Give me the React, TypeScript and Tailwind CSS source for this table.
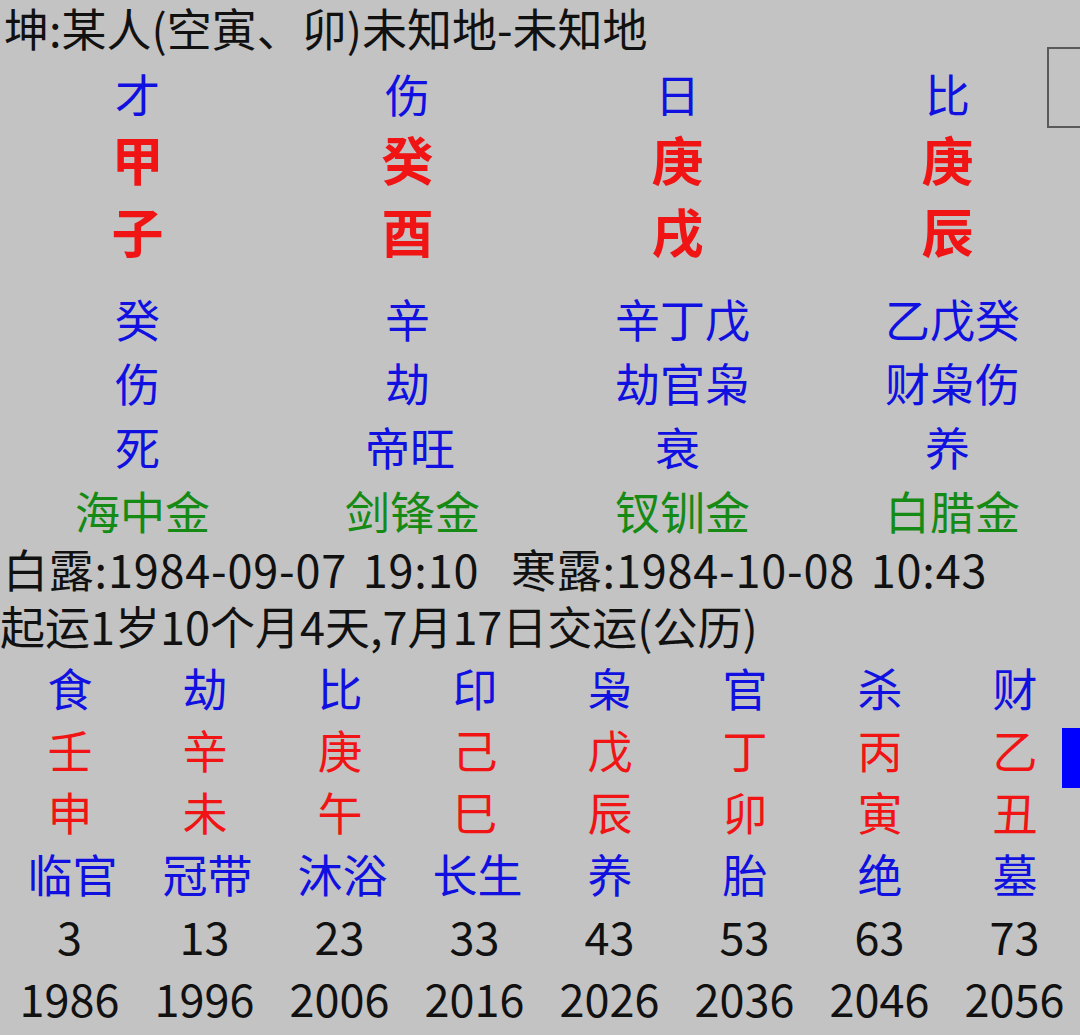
const blue = 'text-[#1010e0]'
const red = 'text-[#f01414]'
const green = 'text-[#158a15]'

const pillars = [
  { god: '才', stem: '甲', branch: '子', hidden: '癸', hiddenGod: '伤', stage: '死', nayin: '海中金' },
  { god: '伤', stem: '癸', branch: '酉', hidden: '辛', hiddenGod: '劫', stage: '帝旺', nayin: '剑锋金' },
  { god: '日', stem: '庚', branch: '戌', hidden: '辛丁戊', hiddenGod: '劫官枭', stage: '衰', nayin: '钗钏金' },
  { god: '比', stem: '庚', branch: '辰', hidden: '乙戊癸', hiddenGod: '财枭伤', stage: '养', nayin: '白腊金' },
]

const luck = [
  { god: '食', stem: '壬', branch: '申', stage: '临官', age: '3', year: '1986' },
  { god: '劫', stem: '辛', branch: '未', stage: '冠带', age: '13', year: '1996' },
  { god: '比', stem: '庚', branch: '午', stage: '沐浴', age: '23', year: '2006' },
  { god: '印', stem: '己', branch: '巳', stage: '长生', age: '33', year: '2016' },
  { god: '枭', stem: '戊', branch: '辰', stage: '养', age: '43', year: '2026' },
  { god: '官', stem: '丁', branch: '卯', stage: '胎', age: '53', year: '2036' },
  { god: '杀', stem: '丙', branch: '寅', stage: '绝', age: '63', year: '2046' },
  { god: '财', stem: '乙', branch: '丑', stage: '墓', age: '73', year: '2056' },
]

// the app centres each label a little right of the column middle, more for longer labels
const nudge = (t: string) => {
  if (/^\d+$/.test(t)) return 'pl-[4px]'
  if (t.length === 1) return 'pl-[5px]'
  if (t.length === 2) return 'pl-[10px]'
  return 'pl-[15px]'
}

function Row4({ items, color, h, extra = '' }: { items: string[]; color: string; h: string; extra?: string }) {
  return (
    <div className={`grid grid-cols-4 ${h} ${extra}`}>
      {items.map((t, i) => (
        <div key={i} className={`flex items-center justify-center ${nudge(t)} ${color}`}>
          {t}
        </div>
      ))}
    </div>
  )
}

function Row8({ items, color }: { items: string[]; color: string }) {
  return (
    <div className="grid grid-cols-8 h-[62px]">
      {items.map((t, i) => (
        <div key={i} className={`flex items-center justify-center ${nudge(t)} ${color}`}>
          {t}
        </div>
      ))}
    </div>
  )
}

export default function App() {
  return (
    <div className="relative w-[1080px] h-[1035px] overflow-hidden bg-[#c3c3c3] text-[45px] leading-none text-[#111] font-['Noto_Sans_CJK_SC','Noto_Sans',sans-serif]">
      <div className="h-[54px] flex items-center pl-[4px] whitespace-nowrap">坤:某人(空寅、卯)未知地-未知地</div>

      <Row4 items={pillars.map(p => p.god)} color={blue} h="h-[64px]" extra="mt-[7px]" />
      <Row4 items={pillars.map(p => p.stem)} color={`${red} font-bold text-[52px]`} h="h-[68px]" />
      <Row4 items={pillars.map(p => p.branch)} color={`${red} font-bold text-[52px]`} h="h-[76px]" />

      <Row4 items={pillars.map(p => p.hidden)} color={blue} h="h-[64px]" extra="mt-[17px]" />
      <Row4 items={pillars.map(p => p.hiddenGod)} color={blue} h="h-[64px]" />
      <Row4 items={pillars.map(p => p.stage)} color={blue} h="h-[64px]" />
      <Row4 items={pillars.map(p => p.nayin)} color={green} h="h-[64px]" />

      <div className="h-[52px] flex items-center pl-[3px] whitespace-pre tracking-[0.8px] [word-spacing:5px]">白露:1984-09-07 19:10  寒露:1984-10-08 10:43</div>
      <div className="h-[62px] flex items-center whitespace-nowrap">起运1岁10个月4天,7月17日交运(公历)</div>

      <Row8 items={luck.map(l => l.god)} color={blue} />
      <Row8 items={luck.map(l => l.stem)} color={red} />
      <Row8 items={luck.map(l => l.branch)} color={red} />
      <Row8 items={luck.map(l => l.stage)} color={blue} />
      <Row8 items={luck.map(l => l.age)} color="text-[#111]" />
      <Row8 items={luck.map(l => l.year)} color="text-[#111]" />

      <div className="absolute left-[1047px] top-[47px] w-[50px] h-[81px] border-2 border-[#5a5a5a]" />
      <div className="absolute left-[1062px] top-[728px] w-[18px] h-[60px] bg-[#0000ff]" />
    </div>
  )
}
